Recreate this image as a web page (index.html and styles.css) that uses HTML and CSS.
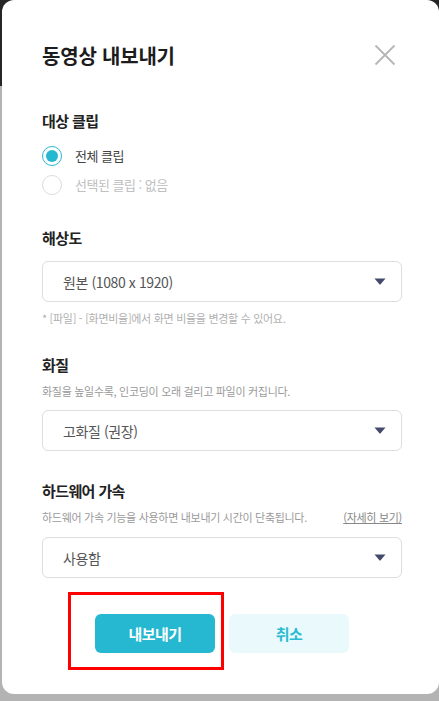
FILE: index.html
```html
<!DOCTYPE html>
<html lang="ko">
<head>
<meta charset="utf-8">
<title>동영상 내보내기</title>
<link rel="stylesheet" href="styles.css">
</head>
<body>
<div class="modal">
  <div class="header">
    <h1 class="title">동영상 내보내기</h1>
    <button class="close" aria-label="닫기">
      <svg width="22" height="22" viewBox="0 0 22 22"><path d="M1.5 1.5 L20.5 20.5 M20.5 1.5 L1.5 20.5" stroke="#b5b5b5" stroke-width="1.8" fill="none"/></svg>
    </button>
  </div>

  <section class="sec sec-clip">
    <h2 class="label">대상 클립</h2>
    <div class="radios">
      <div class="radio on"><span class="dot"></span><span class="rtext">전체 클립</span></div>
      <div class="radio off"><span class="dot"></span><span class="rtext">선택된 클립 : 없음</span></div>
    </div>
  </section>

  <section class="sec sec-res">
    <h2 class="label">해상도</h2>
    <div class="select">
      <span class="val">원본 (1080 x 1920)</span>
      <svg class="caret" width="12" height="7" viewBox="0 0 12 7"><path d="M0.5 0.5 H11.5 L6.6 6.3 Q6 7 5.4 6.3 Z" fill="#454a6b"/></svg>
    </div>
    <p class="hint">* [파일] - [화면비율]에서 화면 비율을 변경할 수 있어요.</p>
  </section>

  <section class="sec sec-q">
    <h2 class="label">화질</h2>
    <p class="desc">화질을 높일수록, 인코딩이 오래 걸리고 파일이 커집니다.</p>
    <div class="select">
      <span class="val">고화질 (권장)</span>
      <svg class="caret" width="12" height="7" viewBox="0 0 12 7"><path d="M0.5 0.5 H11.5 L6.6 6.3 Q6 7 5.4 6.3 Z" fill="#454a6b"/></svg>
    </div>
  </section>

  <section class="sec sec-hw">
    <h2 class="label">하드웨어 가속</h2>
    <p class="desc row"><span>하드웨어 가속 기능을 사용하면 내보내기 시간이 단축됩니다.</span><a class="more">(자세히 보기)</a></p>
    <div class="select">
      <span class="val">사용함</span>
      <svg class="caret" width="12" height="7" viewBox="0 0 12 7"><path d="M0.5 0.5 H11.5 L6.6 6.3 Q6 7 5.4 6.3 Z" fill="#454a6b"/></svg>
    </div>
  </section>

  <div class="actions">
    <div class="btn-wrap">
      <button class="btn primary">내보내기</button>
      <span class="highlight"></span>
    </div>
    <button class="btn secondary">취소</button>
  </div>
</div>
</body>
</html>
```

FILE: styles.css
```css
* { box-sizing: border-box; }
html, body { margin: 0; padding: 0; }
body {
  width: 439px;
  height: 701px;
  overflow: hidden;
  font-family: "Noto Sans CJK KR", "Noto Sans", sans-serif;
  background: linear-gradient(to bottom, #262626 0, #262626 86px, #b3b3b3 86px, #b3b3b3 100%);
}
.modal {
  margin-left: 2px;
  width: 437px;
  height: 694px;
  background: #fff;
  border-radius: 12px;
  padding: 40px 37px 0 40px;
}
.header {
  display: flex;
  justify-content: space-between;
  align-items: center;
  height: 32px;
}
.title {
  margin: 0;
  font-size: 20px;
  font-weight: 700;
  line-height: 32px;
  color: #1c1c1c;
  letter-spacing: -0.2px;
}
.close {
  border: 0;
  background: none;
  padding: 0;
  width: 22px;
  height: 22px;
  margin-right: 6px;
  margin-top: -2px;
  display: block;
}
.close svg { display: block; }
.label {
  margin: 0;
  font-size: 15px;
  font-weight: 700;
  line-height: 20px;
  color: #222;
  letter-spacing: -0.6px;
}
.sec-clip { margin-top: 39px; }
.radios {
  margin-top: 13px;
  display: flex;
  flex-direction: column;
  gap: 5px;
}
.radio {
  display: flex;
  align-items: center;
  height: 24px;
}
.dot {
  width: 20px;
  height: 20px;
  border-radius: 50%;
  border: 1.5px solid #dcdcdc;
  display: flex;
  align-items: center;
  justify-content: center;
  flex: none;
}
.radio.on .dot { border-color: #25b8d0; }
.radio.on .dot::after {
  content: "";
  width: 12px;
  height: 12px;
  border-radius: 50%;
  background: #25b8d0;
}
.rtext {
  margin-left: 13px;
  font-size: 13px;
  line-height: 20px;
  letter-spacing: -0.5px;
}
.radio.on .rtext { color: #444; }
.radio.off .rtext { color: #c0c0c0; }
.sec-res { margin-top: 31px; }
.select {
  height: 41px;
  border: 1px solid #dedede;
  border-radius: 6px;
  display: flex;
  align-items: center;
  justify-content: space-between;
  padding: 0 15px 0 20px;
}
.sec-res .select { margin-top: 13px; }
.sec-q .select { margin-top: 11px; }
.sec-hw .select { margin-top: 12px; }
.val {
  font-size: 14px;
  color: #555;
  letter-spacing: -0.4px;
}
.caret { display: block; }
.hint, .desc {
  margin: 0;
  font-size: 11px;
  line-height: 16px;
  letter-spacing: -0.3px;
}
.hint { margin-top: 8px; color: #b0b0b0; }
.desc { margin-top: 8px; color: #9a9a9a; }
.desc.row { display: flex; justify-content: space-between; }
.more { color: #888; text-decoration: underline; }
.sec-q { margin-top: 29px; }
.sec-hw { margin-top: 30px; }
.actions {
  margin-top: 36px;
  display: flex;
  justify-content: center;
  gap: 14px;
}
.btn-wrap { position: relative; }
.btn {
  width: 120px;
  height: 39px;
  border: 0;
  border-radius: 6px;
  font-family: inherit;
  font-size: 15px;
  font-weight: 700;
  letter-spacing: -0.5px;
  display: block;
}
.primary { background: #25b8d0; color: #fff; }
.secondary { background: #eafafc; color: #2bbad1; }
.highlight {
  position: absolute;
  left: -27px;
  right: -9px;
  top: -22px;
  bottom: -17px;
  border: 3px solid #ff0000;
  pointer-events: none;
}
```
